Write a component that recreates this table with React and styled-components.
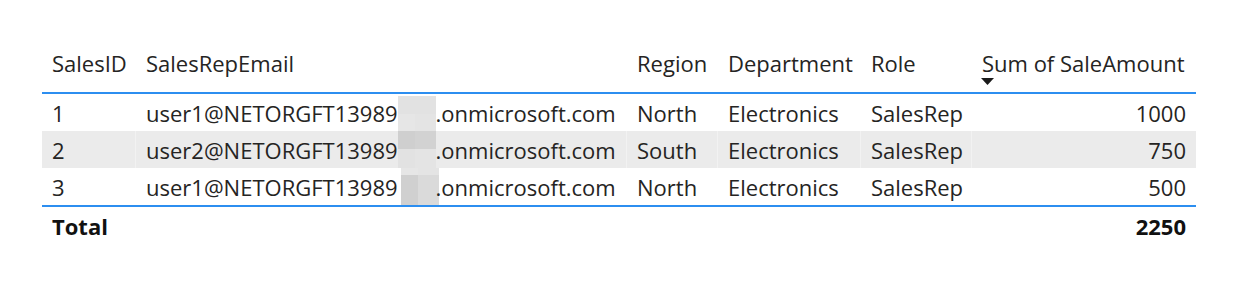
import React from 'react'
import styled, { createGlobalStyle } from 'styled-components'

const GlobalStyle = createGlobalStyle`
    body {
        margin: 0;
        background: #fff;
        font-family: "Open Sans", "Noto Sans", sans-serif;
        color: #252423;
    }
`

const columns = '94px 491px 91px 143px 111px 224px'

const StyledPage = styled.div`
    width: 1250px;
    height: 290px;
    padding: 43px 0 0 42px;
    box-sizing: border-box;
`

const StyledTable = styled.div`
    width: 1154px;
    font-size: 22px;
`

const StyledRow = styled.div`
    display: grid;
    grid-template-columns: ${columns};
    height: ${(props) => props.header ? '49px' : '37px'};
    background: ${(props) => props.shaded ? '#ebebeb' : '#fff'};
    border-bottom: ${(props) => props.ruled ? '2px solid #2c8ef0' : 'none'};
    font-weight: ${(props) => props.bold ? '700' : '400'};
    color: ${(props) => props.bold ? '#111' : '#252423'};
`

const StyledCell = styled.div`
    display: flex;
    align-items: center;
    justify-content: ${(props) => props.right ? 'flex-end' : 'flex-start'};
    padding: 0 10px;
    white-space: nowrap;
    overflow: hidden;
    line-height: 26px;
    border-right: 1px solid ${(props) => props.shaded ? '#f2f2f2' : 'transparent'};
    &:last-child {
        border-right: none;
    }
`

const StyledHeaderCell = styled.div`
    display: flex;
    flex-direction: column;
    align-items: flex-start;
    padding: 7px 9px 0 10px;
    white-space: nowrap;
    line-height: 26px;
`

const StyledSortArrow = styled.svg`
    display: block;
    margin-top: 2px;
    margin-left: -1px;
`

const StyledMosaic = styled.span`
    display: inline-block;
    width: 38px;
    height: 37px;
    flex-shrink: 0;
    margin-left: ${(props) => props.shift}px;
    margin-right: ${(props) => -props.shift}px;
    background: ${(props) => props.tones};
`

const rows = [
    { id: 1, user: 'user1', region: 'North', amount: 1000, shift: 0,
      tones: 'linear-gradient(#fff 0 2px, transparent 2px), conic-gradient(from 90deg at 17px 20px, #e4e4e4 0 25%, #e6e6e6 0 50%, #e2e2e2 0 75%, #e2e2e2 0)' },
    { id: 2, user: 'user2', region: 'South', amount: 750, shift: 0,
      tones: 'conic-gradient(from 90deg at 17px 18px, #e4e4e4 0 25%, #e2e2e2 0 50%, #cfcfcf 0 75%, #d2d2d2 0)' },
    { id: 3, user: 'user1', region: 'North', amount: 500, shift: 3,
      tones: 'conic-gradient(from 90deg at 17px 7px, #dadada 0 25%, #d0d0d0 0 50%, #e6e6e6 0 75%, #e4e4e4 0)' },
]

const App = () => {
    return (
        <StyledPage>
            <GlobalStyle />
            <StyledTable>
                <StyledRow header ruled>
                    <StyledHeaderCell>SalesID</StyledHeaderCell>
                    <StyledHeaderCell>SalesRepEmail</StyledHeaderCell>
                    <StyledHeaderCell>Region</StyledHeaderCell>
                    <StyledHeaderCell>Department</StyledHeaderCell>
                    <StyledHeaderCell>Role</StyledHeaderCell>
                    <StyledHeaderCell>
                        Sum of SaleAmount
                        <StyledSortArrow width="13" height="7" viewBox="0 0 13 7">
                            <path d="M0 0 H13 L6.5 7 Z" fill="#1a1a1a" />
                        </StyledSortArrow>
                    </StyledHeaderCell>
                </StyledRow>
                {
                    rows.map((row, i) => {
                        const shaded = i % 2 === 1
                        return (
                            <StyledRow key={row.id} shaded={shaded} ruled={i === rows.length - 1}>
                                <StyledCell shaded={shaded}>{row.id}</StyledCell>
                                <StyledCell shaded={shaded}>
                                    {`${row.user}@NETORGFT13989`}
                                    <StyledMosaic shift={row.shift} tones={row.tones} />
                                    .onmicrosoft.com
                                </StyledCell>
                                <StyledCell shaded={shaded}>{row.region}</StyledCell>
                                <StyledCell shaded={shaded}>Electronics</StyledCell>
                                <StyledCell shaded={shaded}>SalesRep</StyledCell>
                                <StyledCell shaded={shaded} right>{row.amount}</StyledCell>
                            </StyledRow>
                        )
                    })
                }
                <StyledRow bold>
                    <StyledCell>Total</StyledCell>
                    <StyledCell />
                    <StyledCell />
                    <StyledCell />
                    <StyledCell />
                    <StyledCell right>2250</StyledCell>
                </StyledRow>
            </StyledTable>
        </StyledPage>
    )
}

export default App
